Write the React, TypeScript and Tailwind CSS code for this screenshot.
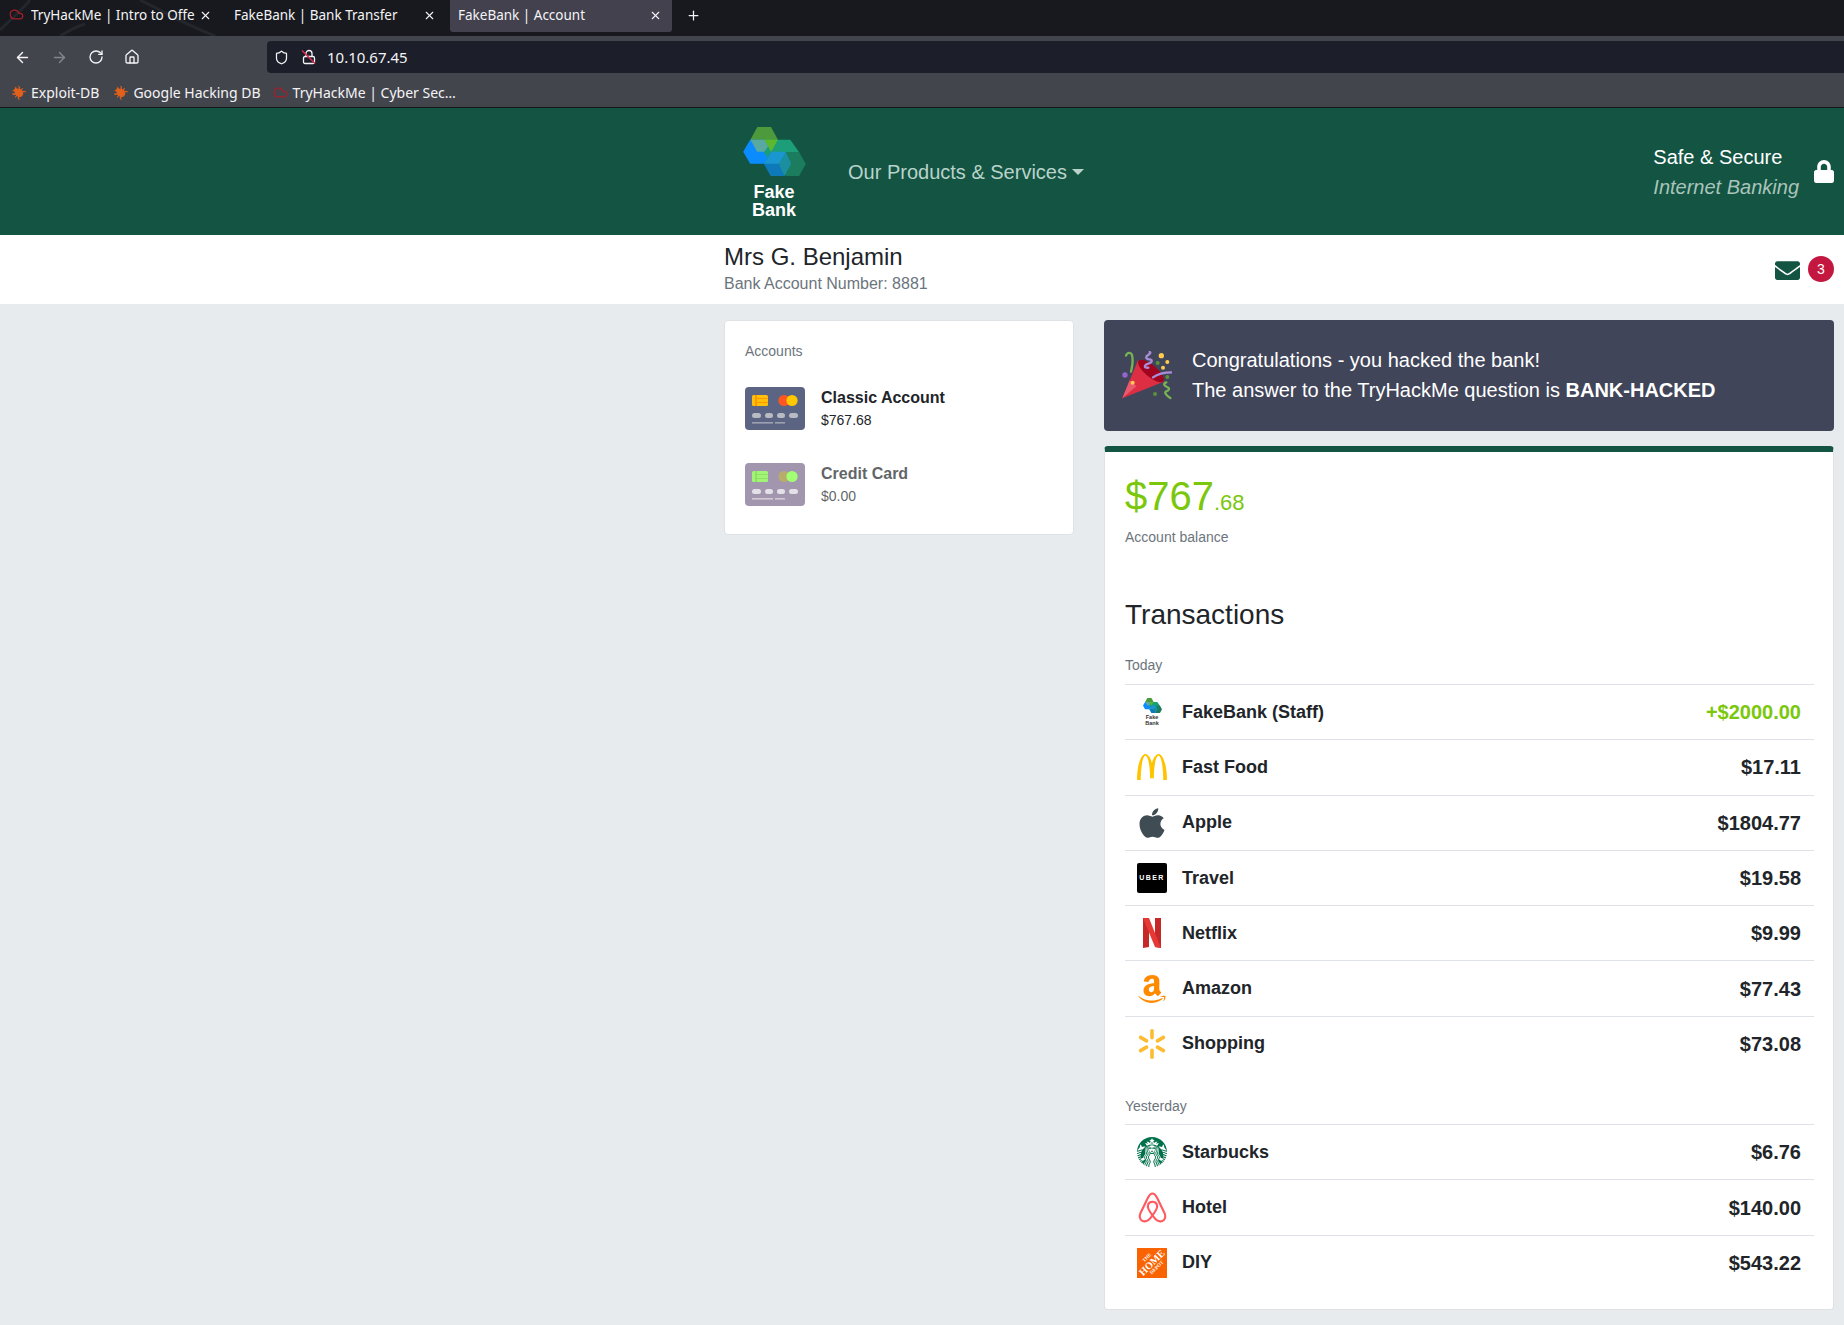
import { ArrowLeft, ArrowRight, RotateCw, House, Shield, X, Plus, Bug, Cloud } from "lucide-react";
import { FaLock, FaEnvelope, FaApple, FaAmazon } from "react-icons/fa";
import { SiMcdonalds, SiStarbucks } from "react-icons/si";

const hex = (x: number, y: number, w: number, h: number) =>
  `${x + w * 0.25},${y} ${x + w * 0.75},${y} ${x + w},${y + h / 2} ${x + w * 0.75},${y + h} ${x + w * 0.25},${y + h} ${x},${y + h / 2}`;

function LogoMark({ className }: { className: string }) {
  return (
    <svg viewBox="128 50 188 147" className={className}>
      <polygon points={hex(150, 50, 82, 75)} fill="#4c9a3c" />
      <polygon points={hex(128, 88, 84, 72)} fill="#0a8cff" />
      <polygon points="150,88 192,88 212,124 170,124" fill="#5aa9a0" />
      <polygon points={hex(190, 88, 106, 75)} fill="#1c9e78" />
      <polygon points="192,88 232,88 212,124" fill="#5cb82c" />
      <polygon points={hex(190, 125, 82, 72)} fill="#0d79b8" />
      <polygon points={hex(236, 125, 80, 72)} fill="#1b7c5e" />
      <polygon points="212,124 255,124 272,160 235,160 190,160" fill="#1a97d0" />
      <polygon points="255,125 272,160 252,197 235,160" fill="#1b8fa0" />
    </svg>
  );
}

function CardIcon({ body, chip, chip2, c1, c2, dot }: { body: string; chip: string; chip2: string; c1: string; c2: string; dot: string }) {
  return (
    <svg viewBox="0 0 60 43" className="w-[60px] h-[43px] shrink-0">
      <rect width="60" height="43" rx="4" fill={body} />
      <rect x="7" y="8" width="16" height="11" rx="1.5" fill={chip} />
      <rect x="10" y="8" width="2" height="11" fill={chip2} />
      <rect x="12" y="11" width="11" height="1" fill={chip2} />
      <rect x="12" y="15" width="11" height="1" fill={chip2} />
      <circle cx="39" cy="13.5" r="5.6" fill={c1} />
      <circle cx="47" cy="13.5" r="5.6" fill={c2} />
      <rect x="7" y="26" width="9" height="5" rx="2.5" fill={dot} />
      <rect x="20" y="26" width="8" height="5" rx="2.5" fill={dot} />
      <rect x="32" y="26" width="8" height="5" rx="2.5" fill={dot} />
      <rect x="44" y="26" width="9" height="5" rx="2.5" fill={dot} />
      <rect x="7" y="35" width="21" height="1.6" fill={dot} opacity="0.7" />
      <rect x="30" y="35" width="10" height="1.6" fill={dot} opacity="0.7" />
    </svg>
  );
}

function PartyPopper() {
  return (
    <svg viewBox="65 120 150 150" className="w-[50px] h-[50px] shrink-0">
      <polygon points="66,262 113,148 190,212" fill="#dd2e44" />
      <polygon points="66,262 88,208 108,226" fill="#ea596e" />
      <ellipse cx="152" cy="180" rx="48" ry="18" transform="rotate(40 152 180)" fill="#a0041e" />
      <path d="M92 182c4-18 8-32 3-50-3-8-14-9-18 2" fill="none" stroke="#77b255" strokeWidth="7" strokeLinecap="round" />
      <path d="M148 123c8 6-14 10-10 18s16 0 16 9-18 6-20 14 10 6 10 6" fill="none" stroke="#aa8dd8" strokeWidth="7" strokeLinecap="round" />
      <path d="M158 199c16-12 34-15 56-15" fill="none" stroke="#aa8dd8" strokeWidth="7" strokeLinecap="round" />
      <path d="M198 214c-10 3-8 10 2 14s6 10-2 13 0 12 12 20" fill="none" stroke="#77b255" strokeWidth="7" strokeLinecap="round" />
      <circle cx="74" cy="192" r="8" fill="#9266cc" />
      <circle cx="183" cy="134" r="8" fill="#ffcc4d" />
      <circle cx="172" cy="156" r="6" fill="#5c913b" />
      <circle cx="201" cy="153" r="6" fill="#ffcc4d" />
      <circle cx="188" cy="170" r="6" fill="#ffcc4d" />
      <circle cx="201" cy="198" r="6" fill="#5c913b" />
      <circle cx="164" cy="249" r="6" fill="#5c913b" />
      <circle cx="97" cy="215" r="6" fill="#ffcc4d" />
    </svg>
  );
}

function NetflixLogo() {
  return (
    <svg viewBox="0 0 18 30" className="w-[18px] h-[30px]">
      <polygon points="0,0 6,0 6,29 0,30" fill="#c62828" />
      <polygon points="12,0 18,0 18,30 12,29" fill="#c62828" />
      <polygon points="0,0 6,0 18,30 12,29" fill="#e53935" />
    </svg>
  );
}

function WalmartLogo() {
  return (
    <svg viewBox="0 0 30 30" className="w-[30px] h-[30px]">
      {[0, 60, 120, 180, 240, 300].map((a) => (
        <rect key={a} x="13.2" y="0" width="3.6" height="10.5" rx="1.8" fill="#fdbb30" transform={`rotate(${a} 15 15)`} />
      ))}
    </svg>
  );
}

function AirbnbLogo() {
  return (
    <svg viewBox="0 0 30 32" className="w-[29px] h-[31px]" fill="none" stroke="#ff5a5f" strokeWidth="2.2" strokeLinejoin="round">
      <path d="M15 1.5C12.5 1.5 11.5 3.5 10 6.5L2.5 22C1 25.5 2 29.5 5.5 30.3C9 31 12.5 28 15 24C17.5 28 21 31 24.5 30.3C28 29.5 29 25.5 27.5 22L20 6.5C18.5 3.5 17.5 1.5 15 1.5Z" />
      <path d="M15 24C11 19 9.5 16 10.3 13.5C11 11 13 10 15 10C17 10 19 11 19.7 13.5C20.5 16 19 19 15 24Z" />
    </svg>
  );
}

function FakeBankSmall() {
  return (
    <div className="w-[30px] flex flex-col items-center">
      <LogoMark className="w-[19px] h-[15px]" />
      <div className="mt-[1px] text-[5.5px] leading-[6px] font-bold text-[#333] text-center">
        Fake
        <br />
        Bank
      </div>
    </div>
  );
}

function UberLogo() {
  return (
    <div className="w-[30px] h-[30px] rounded-[2px] bg-black flex items-center justify-center text-white text-[7px] font-bold tracking-[1.4px]">
      UBER
    </div>
  );
}

function HomeDepotLogo() {
  return (
    <div className="w-[30px] h-[30px] bg-[#f96302] flex items-center justify-center overflow-hidden">
      <div className="-rotate-45 text-white font-bold text-center text-[10px] leading-[9px] font-['Liberation_Serif',serif]">
        <div className="text-[5px] leading-[5px]">THE</div>
        HOME
        <div className="text-[5px] leading-[5px]">DEPOT</div>
      </div>
    </div>
  );
}

type Tx = { name: string; amount: string; icon: React.ReactNode; credit?: boolean };

const today: Tx[] = [
  { name: "FakeBank (Staff)", amount: "+$2000.00", credit: true, icon: <FakeBankSmall /> },
  { name: "Fast Food", amount: "$17.11", icon: <SiMcdonalds className="w-[30px] h-[30px] text-[#ffc300]" /> },
  { name: "Apple", amount: "$1804.77", icon: <FaApple className="w-[34px] h-[34px] shrink-0 text-[#3f4c53]" /> },
  { name: "Travel", amount: "$19.58", icon: <UberLogo /> },
  { name: "Netflix", amount: "$9.99", icon: <NetflixLogo /> },
  { name: "Amazon", amount: "$77.43", icon: <FaAmazon className="w-[32px] h-[32px] shrink-0 text-[#ff8a00]" /> },
  { name: "Shopping", amount: "$73.08", icon: <WalmartLogo /> },
];

const yesterday: Tx[] = [
  { name: "Starbucks", amount: "$6.76", icon: <SiStarbucks className="w-[30px] h-[30px] text-[#00704a]" /> },
  { name: "Hotel", amount: "$140.00", icon: <AirbnbLogo /> },
  { name: "DIY", amount: "$543.22", icon: <HomeDepotLogo /> },
];

function TxRow({ tx }: { tx: Tx }) {
  return (
    <div className="h-[55.3px] border-t border-[#dee2e6] flex items-center pl-3 pr-[13px] text-[18px] font-bold text-[#212529]">
      <div className="w-[30px] h-[30px] flex items-center justify-center shrink-0">{tx.icon}</div>
      <div className="ml-[15px]">{tx.name}</div>
      <div className={`ml-auto text-[20px] ${tx.credit ? "text-[#7ac70c]" : ""}`}>{tx.amount}</div>
    </div>
  );
}

function Tab({ label, width, active, favicon }: { label: string; width: string; active?: boolean; favicon?: boolean }) {
  return (
    <div className={`${width} h-8 flex items-center relative rounded-b-[3px] text-[13.5px] ${active ? "bg-[#42414d]" : ""}`}>
      {favicon && <Cloud className="absolute left-[9px] top-[7px] w-[15px] h-[15px] text-[#a3202a]" />}
      <div className={`${favicon ? "ml-[31px] mr-[31px]" : "ml-[8px] mr-[38px]"} whitespace-nowrap overflow-hidden flex-1 mt-[-1px]`}>{label}</div>
      <X className={`absolute ${active ? "right-[10px]" : "right-[14px]"} top-[9px] w-[13px] h-[13px]`} />
    </div>
  );
}

function NoLock() {
  return (
    <svg viewBox="0 0 16 16" className="ml-[12px] w-[16px] h-[16px]" fill="none" stroke="#f4f4f6" strokeWidth="1.3">
      <rect x="2.5" y="7.5" width="11" height="7" rx="1.5" />
      <path d="M5 7.5V4.5a3 3 0 0 1 6 0v3" />
      <path d="M1 1.5L14 14.5" stroke="#e22850" strokeWidth="1.4" />
    </svg>
  );
}

export default function App() {
  return (
    <div className="min-h-[1325px] bg-[#e8ebee] font-['Liberation_Sans',Arial,sans-serif] text-[#212529] overflow-hidden">
      {/* Browser */}
      <div className="font-['Noto_Sans',sans-serif] text-[14px] text-[#f4f4f6]">
        <div className="h-[36px] bg-[#17191e] flex items-start relative">
          {/* faint theme artwork behind the tabs */}
          <svg viewBox="0 0 240 36" className="absolute left-0 top-0 w-[240px] h-[36px]" fill="none" stroke="#23262c" strokeWidth="3">
            <path d="M0 30C10 20 22 10 30 0" />
            <path d="M140 0C165 12 180 22 215 36" />
            <path d="M60 36C70 30 78 26 85 24" />
          </svg>
          <div className="relative flex items-start">
            <Tab label="TryHackMe | Intro to Offer" width="w-[226px]" favicon />
            <Tab label="FakeBank | Bank Transfer" width="w-[224px]" />
            <Tab label="FakeBank | Account" width="w-[222px]" active />
            <Plus className="ml-[14px] mt-[8px] w-[15px] h-[15px]" />
          </div>
        </div>
        <div className="h-[42px] bg-[#43454d] flex items-center">
          <div className="w-[267px] flex items-center pl-[14px] gap-[20px] shrink-0">
            <ArrowLeft className="w-[17px] h-[17px]" />
            <ArrowRight className="w-[17px] h-[17px] text-[#85868c]" />
            <RotateCw className="w-[16px] h-[16px]" />
            <House className="w-[16px] h-[16px]" />
          </div>
          <div className="flex-1 h-[32px] bg-[#1c1e29] rounded-l-[4px] flex items-center pl-[7px]">
            <Shield className="w-[15px] h-[15px]" />
            <NoLock />
            <div className="ml-[10px] text-[15px]">10.10.67.45</div>
          </div>
        </div>
        <div className="h-[30px] bg-[#43454d] border-b border-[#14161a] flex items-center pl-[12px]">
          <Bug className="w-[13px] h-[13px] rotate-[-50deg] text-[#e0601c] fill-[#e0601c]" />
          <div className="ml-[6px]">Exploit-DB</div>
          <Bug className="ml-[15px] w-[13px] h-[13px] rotate-[-50deg] text-[#e0601c] fill-[#e0601c]" />
          <div className="ml-[6px]">Google Hacking DB</div>
          <Cloud className="ml-[12px] w-[15px] h-[15px] text-[#a3202a]" />
          <div className="ml-[5px]">TryHackMe | Cyber Sec…</div>
        </div>
      </div>

      {/* Header */}
      <header className="h-[127px] bg-[#135443] flex items-center pl-[724px] pr-[10px]">
        <div className="w-[100px] flex flex-col items-center pt-[2px]">
          <LogoMark className="w-[63px] h-[49px]" />
          <div className="mt-[7px] text-[18px] leading-[18px] font-bold text-white text-center">
            Fake
            <br />
            Bank
          </div>
        </div>
        <div className="ml-[24px] flex items-center text-[20px] text-[#b9d3ca]">
          Our Products &amp; Services
          <span className="ml-[5px] w-0 h-0 border-x-[6px] border-x-transparent border-t-[6px] border-t-[#b9d3ca]" />
        </div>
        <div className="ml-auto text-[20px] leading-[30px]">
          <div className="text-white">Safe &amp; Secure</div>
          <div className="italic text-[#a9c4ba]">Internet Banking</div>
        </div>
        <FaLock className="ml-[15px] w-[20px] h-[23px] text-white" />
      </header>

      {/* Name band */}
      <div className="h-[69px] bg-white flex items-start pl-[724px] pr-[10px] pt-[7px]">
        <div>
          <div className="text-[24px] leading-[29px]">Mrs G. Benjamin</div>
          <div className="mt-[3px] text-[16px] leading-[20px] text-[#6c757d]">Bank Account Number: 8881</div>
        </div>
        <FaEnvelope className="ml-auto mt-[16px] w-[25px] h-[25px] text-[#135443]" />
        <div className="ml-[8px] mt-[14px] w-[26px] h-[26px] rounded-full bg-[#c4173f] text-white text-[14px] flex items-center justify-center">3</div>
      </div>

      {/* Body */}
      <div className="flex items-start pl-[724px] pt-[16px] gap-[30px]">
        <div className="w-[350px] h-[215px] bg-white border border-[#dfe2e5] rounded-[4px] px-[20px] pt-[22px]">
          <div className="text-[14px] leading-[17px] text-[#6c757d]">Accounts</div>
          <div className="mt-[27px] flex items-center gap-4">
            <CardIcon body="#5b6482" chip="#ffc107" chip2="#ff9800" c1="#ff5722" c2="#ffc800" dot="#b8bbc3" />
            <div>
              <div className="text-[16px] leading-[20px] font-bold">Classic Account</div>
              <div className="mt-[4px] text-[14px] leading-[17px]">$767.68</div>
            </div>
          </div>
          <div className="mt-[33px] flex items-center gap-4 opacity-70">
            <CardIcon body="#7c6a8e" chip="#7cf23a" chip2="#5fd62a" c1="#9a8a2e" c2="#7cff3a" dot="#d8d4de" />
            <div>
              <div className="text-[16px] leading-[20px] font-bold">Credit Card</div>
              <div className="mt-[4px] text-[14px] leading-[17px]">$0.00</div>
            </div>
          </div>
        </div>

        <div className="w-[730px]">
          <div className="h-[111px] bg-[#414559] rounded-[4px] flex items-center pl-[18px] text-white text-[20px] leading-[30px]">
            <PartyPopper />
            <div className="ml-[20px] mt-[-2px]">
              <div>Congratulations - you hacked the bank!</div>
              <div>
                The answer to the TryHackMe question is <b>BANK-HACKED</b>
              </div>
            </div>
          </div>

          <div className="mt-[15px] h-[864px] bg-white border-x border-b border-[#dfe2e5] border-t-[6px] border-t-[#135443] rounded-[4px] pl-[20px] pr-[19px] pt-[20px]">
            <div className="text-[40px] leading-[48px] text-[#7ac70c]">
              $767<span className="text-[22px]">.68</span>
            </div>
            <div className="mt-[2px] text-[14px] leading-[17px] text-[#6c757d]">Account balance</div>
            <div className="mt-[52px] text-[28px] leading-[34px]">Transactions</div>
            <div className="mt-[25px] mb-[10px] text-[14px] leading-[17px] text-[#6c757d]">Today</div>
            {today.map((tx) => (
              <TxRow key={tx.name} tx={tx} />
            ))}
            <div className="mt-[27px] mb-[9px] text-[14px] leading-[17px] text-[#6c757d]">Yesterday</div>
            {yesterday.map((tx) => (
              <TxRow key={tx.name} tx={tx} />
            ))}
          </div>
        </div>
      </div>
    </div>
  );
}
